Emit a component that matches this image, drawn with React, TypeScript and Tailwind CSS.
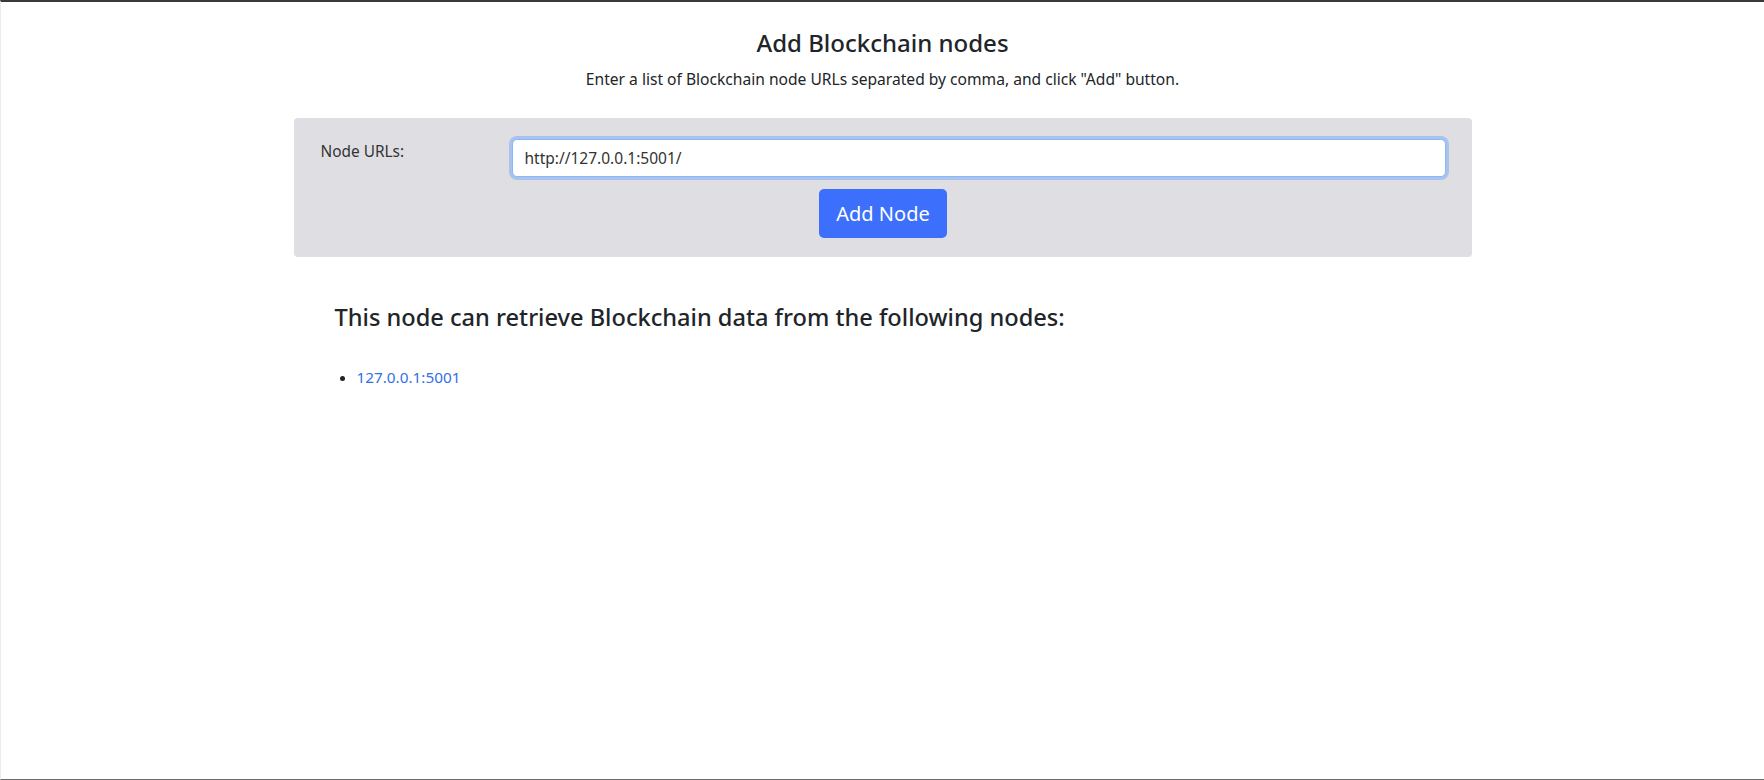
export default function App() {
  const nodes = ['127.0.0.1:5001']

  return (
    <div
      className="h-[780px] overflow-hidden border-t-2 border-t-[#3a3a3a] border-b border-b-[#6b6b6b] border-l border-l-[#ececec] bg-white text-[#212529]"
      style={{ fontFamily: '"Noto Sans", "Open Sans", sans-serif' }}
    >
      <div className="mx-auto w-[1178px]">
        <div className="pt-[25px] text-center">
          <h4 className="text-[24px] font-medium leading-[32px]">Add Blockchain nodes</h4>
          <p className="mt-[8px] text-[15.6px] leading-[24px]">
            Enter a list of Blockchain node URLs separated by comma, and click "Add" button.
          </p>
        </div>

        <div className="mt-[27px] rounded-[4px] bg-[#dfdfe3] pt-[21px] pb-[19px] pl-[27px] pr-[26px]">
          <div className="flex">
            <label className="w-[191px] pt-[1px] text-[15.4px] leading-[24px] text-[#333]">Node URLs:</label>
            <input
              type="text"
              defaultValue="http://127.0.0.1:5001/"
              className="h-[38px] flex-1 rounded-[5px] border border-[#86b7fe] bg-white px-[12px] text-[15.5px] text-[#333] shadow-[0_0_0_3px_#a9c3ec] outline-none"
            />
          </div>
          <div className="mt-[12px] flex justify-center">
            <button className="h-[49px] w-[128px] rounded-[5px] bg-[#3b6ffc] text-[20px] text-white">
              Add Node
            </button>
          </div>
        </div>

        <div className="px-[41px] pt-[44px]">
          <h4 className="text-[23.6px] font-medium leading-[32px]">
            This node can retrieve Blockchain data from the following nodes:
          </h4>
          <ul className="mt-[32px] list-disc pl-[22px] text-[15.3px] leading-[24px]">
            {nodes.map(n => (
              <li key={n}>
                <a href="#" className="text-[#3470e4]">{n}</a>
              </li>
            ))}
          </ul>
        </div>
      </div>
    </div>
  )
}
